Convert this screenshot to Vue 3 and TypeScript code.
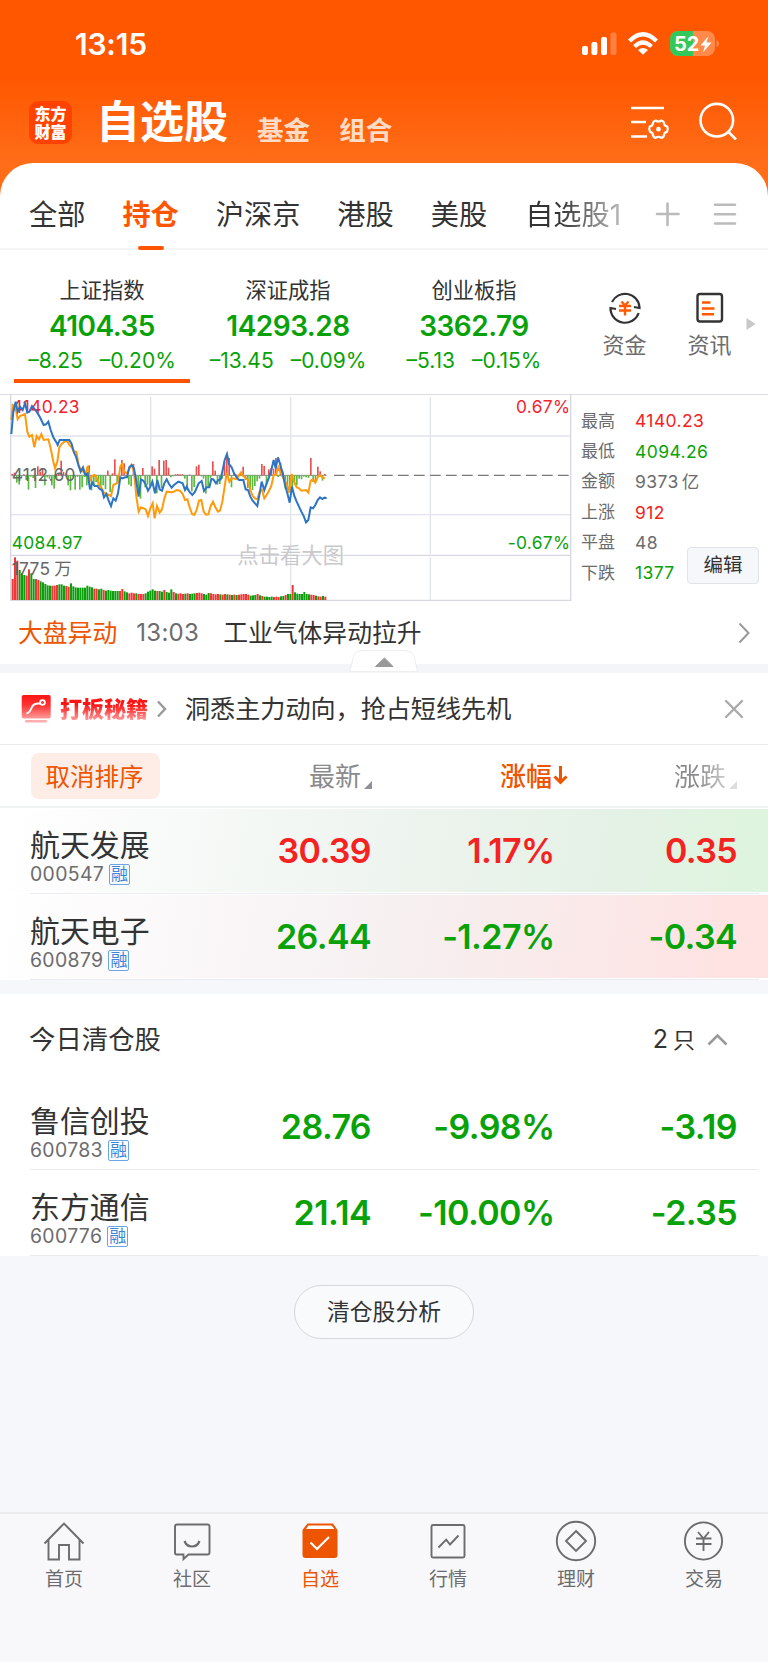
<script setup lang="ts">
interface Quote { name: string; code: string; price: string; pct: string; diff: string; tone: string; wash: string }

const tabs: string[] = ['全部', '持仓', '沪深京', '港股', '美股', '自选股1']
const indices = [
  { name: '上证指数', value: '4104.35', diff: '–8.25', pct: '–0.20%' },
  { name: '深证成指', value: '14293.28', diff: '–13.45', pct: '–0.09%' },
  { name: '创业板指', value: '3362.79', diff: '–5.13', pct: '–0.15%' },
]
const stats = [
  { label: '最高', value: '4140.23', tone: 'up' },
  { label: '最低', value: '4094.26', tone: 'down' },
  { label: '金额', value: '9373', unit: '亿', tone: 'flat' },
  { label: '上涨', value: '912', tone: 'up' },
  { label: '平盘', value: '48', tone: 'flat' },
  { label: '下跌', value: '1377', tone: 'down' },
]
const holdings: Quote[] = [
  { name: '航天发展', code: '000547', price: '30.39', pct: '1.17%', diff: '0.35', tone: 'up', wash: 'green' },
  { name: '航天电子', code: '600879', price: '26.44', pct: '-1.27%', diff: '-0.34', tone: 'down', wash: 'red' },
]
const cleared: Quote[] = [
  { name: '鲁信创投', code: '600783', price: '28.76', pct: '-9.98%', diff: '-3.19', tone: 'down', wash: '' },
  { name: '东方通信', code: '600776', price: '21.14', pct: '-10.00%', diff: '-2.35', tone: 'down', wash: '' },
]
const nav: string[] = ['首页', '社区', '自选', '行情', '理财', '交易']

const blueLine = '34,132 40,65 47,35 53,65 60,50 68,60 75,40 82,68 88,65 96,48 110,65 120,82 131,105 138,103 145,95 152,120 160,142 168,155 173,165 179,150 208,150 215,162 222,188 228,200 235,225 242,245 249,232 256,255 263,250 270,298 277,278 284,288 292,288 299,297 306,300 312,322 319,312 326,332 333,348 340,325 347,332 354,310 361,262 368,265 375,262 381,262 388,232 395,225 402,235 409,275 416,320 423,268 430,272 437,283 444,302 451,290 457,275 465,310 472,270 479,298 486,302 493,280 500,268 507,282 515,293 522,285 535,275 548,280 555,300 560,290 568,305 577,315 585,305 596,280 605,273 612,303 620,292 628,292 634,267 640,268 648,280 655,270 662,268 668,240 674,210 681,192 687,222 695,232 702,250 710,262 717,270 730,270 737,298 744,300 751,320 758,332 765,340 772,348 779,310 785,275 793,300 800,280 807,262 814,240 821,210 827,235 834,202 841,225 848,250 855,285 862,310 869,338 876,290 883,318 890,335 897,350 904,365 911,378 918,397 925,390 932,352 939,355 946,345 953,330 960,322 967,327 973,323 980,325'
const orangeLine = '34,90 38,45 46,50 53,88 60,78 68,75 75,72 82,125 88,140 96,135 103,172 110,138 117,148 124,132 131,150 145,148 152,175 160,215 165,235 172,215 178,172 185,162 193,155 202,153 208,165 215,172 222,185 229,185 236,225 243,242 250,245 256,255 263,228 270,270 276,258 284,255 291,265 298,285 305,295 312,308 320,312 333,318 340,285 354,278 361,230 366,222 373,245 381,250 388,235 395,225 402,245 409,320 416,365 423,352 437,358 444,378 451,355 458,340 464,385 471,348 479,368 486,358 493,325 500,305 515,307 522,305 530,300 540,302 548,312 555,330 562,328 569,352 576,372 583,375 590,360 597,332 604,330 611,365 618,374 625,373 632,348 639,335 646,352 654,365 660,362 667,335 674,290 680,248 688,275 695,265 709,267 723,247 730,258 744,270 751,300 758,318 765,325 772,328 779,305 786,300 793,325 800,315 807,302 814,288 821,255 828,255 835,232 842,248 849,262 856,275 863,290 868,308 875,252 882,275 890,292 897,295 904,302 918,300 925,308 932,272 939,268 946,278 953,262 960,255 967,262 975,265'

/* positive = buying pressure (above the axis), negative = selling pressure */
const force: number[] = [
  4, 8, -22, -28, -6, 3, -14, -43, -4, -8, -38, 27, 10, 20, -30, -6, -10, -30, -40, -12,
  6, 44, 10, 6, -30, -45, -4, -43, -5, -43, -36, -5, -30, 30, -45, -28, -20, -32, -40, -30,
  -42, 14, -50, 6, 48, -22, -5, 46, 36, -4, -28, -33, 34, -34, -50, -70, 22, -36, -28, -34,
  27, 20, -54, 46, -38, 44, 46, 23, -6, -3, 3, 4, 3, 3, -10, -45, 2, -48, -35, 27,
  32, -3, -10, -55, -34, -8, 42, 14, -28, -26, -10, 40, 62, 52, -36, 6, 2, -6, 8, 26,
  -14, -38, -50, -44, -32, -18, -10, 34, 28, -28, 18, 22, 20, 52, -5, 38, 12, -40, -42, -50,
  -38, -28, -30, -10, -12, -4, -6, -8, 52, -20, -18, 26, 12, -16, 4,
]
const volume: number[] = [
  63, 128, 118, 90, 80, 75, 73, 92, 80, 63, 63, 60, 56, 53, 48, 44, 43, 43, 43, 45,
  47, 47, 43, 42, 40, 50, 41, 38, 37, 37, 37, 37, 43, 40, 38, 34, 34, 32, 34, 30,
  28, 30, 28, 27, 27, 27, 27, 33, 26, 23, 20, 22, 20, 20, 18, 18, 18, 20, 25, 28,
  32, 28, 27, 27, 25, 30, 24, 22, 32, 24, 20, 19, 20, 18, 19, 20, 18, 19, 20, 21,
  22, 20, 18, 16, 21, 20, 18, 17, 18, 17, 16, 18, 17, 16, 15, 16, 15, 16, 17, 18,
  18, 16, 13, 14, 15, 18, 14, 12, 10, 10, 9, 10, 9, 10, 9, 11, 12, 15, 18, 18,
  45, 23, 19, 18, 18, 24, 18, 17, 16, 15, 13, 11, 10, 12, 10,
]
const volumeColors = 'rrrgggrrggrrgggggrrrgggrrggggggggggrrggrggggggrrggrrrgrrrgggggrggrgggrgrrrgrgggrrrgggrrrrgrrgrgrgrrrrrgggrgrggggrrrggrggrgrggggg' + 'rgggggggrrgrrgr'
const colorAt = (i: number): boolean => (i < 120 ? volumeColors[i] : volumeColors[volumeColors.length - 135 + i]) === 'r'
const volumeBars = volume.map((h, i) => ({ x: 35 + i * 7, h, red: colorAt(i) }))
const forceBars = force.map((h, i) => ({ x: 34 + i * 7, h }))
</script>

<template>
  <div class="page">
    <header class="hero">
      <div class="status">
        <span class="clock">13:15</span>
        <svg class="status-icons" width="140" height="30" viewBox="580 28 140 30">
          <g fill="#fff">
            <rect x="582" y="46" width="6" height="9" rx="2" /><rect x="591.4" y="42" width="6" height="13" rx="2" />
            <rect x="601" y="37" width="6" height="18" rx="2" /><rect x="610.5" y="32.5" width="6" height="22.5" rx="2" opacity=".25" />
          </g>
          <g fill="none" stroke="#fff" stroke-width="4.2">
            <path d="M629.5 41 Q643 27.500 656.500 41" /><path d="M634.500 46.500 Q643 38.500 651.500 46.500" />
          </g>
          <path d="M638 50 Q643 46 648 50 L643 54.800Z" fill="#fff" />
          <rect x="670" y="31" width="45" height="25" rx="8" fill="#ff8a4a" />
          <path d="M678 31H693V56H678A8 8 0 0 1 670 48V39A8 8 0 0 1 678 31" fill="#34c759" />
          <path d="M716.500 40Q719 41 719 43.500T716.500 47.500Z" fill="#ff8a4a" />
          <text x="674" y="51" class="battery">52</text>
          <path d="M708.500 36 L700.500 45.500H705L703 52.500 L711.500 42.500H706.500Z" fill="#fff" />
        </svg>
      </div>
      <div class="brand">
        <div class="logo"><span>东方</span><span>财富</span></div>
        <h1>自选股</h1>
        <span class="alt">基金</span>
        <span class="alt">组合</span>
        <svg class="tools" width="110" height="40" viewBox="630 100 110 40" fill="none" stroke="#fff" stroke-width="2.6">
          <path d="M631 108H664M631 122H646M631 136.500H647" />
          <path d="M655.600 120.500 Q658.500 122.500 661.400 120.500 Q663.700 120.800 664.200 123.700 Q664.300 125.800 667.200 126.500 Q668.500 129 667 131.800 Q664.300 132.300 664.200 134.500 Q663.800 137.300 661.500 137.900 Q658.500 135.700 655.500 137.900 Q653.200 137.300 652.800 134.500 Q652.700 132.300 650 131.800 Q648.500 129 649.800 126.500 Q652.700 125.800 652.800 123.700 Q653.300 120.800 655.600 120.500Z" stroke-width="2.2" />
          <circle cx="658.500" cy="129.200" r="1.600" fill="#fff" stroke-width="1.500" />
          <circle cx="716.800" cy="120.200" r="16.300" /><path d="M728 131.500 736 139.500" />
        </svg>
      </div>
    </header>

    <main class="sheet">
      <nav class="tabs">
        <span v-for="(t, i) in tabs" :key="t" :class="['tab', { active: i === 1, fade: i === 5 }]">{{ t }}</span>
        <svg class="tab-tools" width="84" height="28" viewBox="654 200 84 28" fill="none" stroke-width="2.600" stroke-linecap="round">
          <path d="M657 214H678.500M667.500 203.500V225" stroke="#bbb" />
          <path d="M715 204.700H735M715 214.200H735M715 223.500H735" stroke="#bbb" />
        </svg>
      </nav>

      <section class="indices">
        <div v-for="(x, i) in indices" :key="x.name" :class="['index', { on: i === 0 }]">
          <div class="index-name">{{ x.name }}</div>
          <div class="index-value">{{ x.value }}</div>
          <div class="index-sub"><span>{{ x.diff }}</span><span>{{ x.pct }}</span></div>
        </div>
        <div class="shortcuts">
          <div class="shortcut">
            <svg width="36" height="36" viewBox="607 290 36 36" fill="none" stroke="#333" stroke-width="2.200">
              <path d="M612 302A14.500 14.500 0 0 1 639.500 307V308L634 307M638.700 313A14.500 14.500 0 0 1 610.500 308V308L616 309" />
              <path d="M621.500 301.500 625 305.500 628.500 301.500M619 306H631M619 310.500H631M625 306V315.500" stroke="#ff5a00" stroke-width="2.400" />
            </svg>
            <span>资金</span>
          </div>
          <div class="shortcut">
            <svg width="36" height="36" viewBox="692 290 36 36" fill="none" stroke="#333" stroke-width="2.400">
              <rect x="697.500" y="294" width="24.500" height="27.500" rx="2.500" />
              <path d="M702 302.500H710.500M702 308.500H714.500M702 314.200H714" stroke="#ff5a00" />
            </svg>
            <span>资讯</span>
          </div>
        </div>
        <svg class="more" width="10" height="14" viewBox="0 0 10 14"><path d="M.5 1V13L9.500 7Z" fill="#c8c8ca" /></svg>
      </section>

      <section class="market">
        <svg class="chart" width="572" height="208" viewBox="0 12 1716 624">
          <g stroke="#e1e4ed" stroke-width="4" fill="none">
            <path d="M32 138H1712M32 374H1712M452 21V492M452 501V630M872 21V492M872 501V630M1291 21V492M1291 501V630" />
            <path d="M32 13V631H1712V13M32 496H1712" stroke="#d6d9e3" />
          </g>
          <text x="712" y="520" class="hint">点击看大图</text>
          <path d="M34 256H980" stroke="#888" stroke-width="3" />
          <path d="M1002 256H1712" stroke="#777" stroke-width="4" stroke-dasharray="32 16" />
          <rect v-for="b in forceBars" :key="'f' + b.x" :x="b.x" :y="b.h > 0 ? 256 - b.h : 256" width="5" :height="Math.abs(b.h)" :fill="b.h > 0 ? '#ea5050' : '#5cba42'" />
          <rect v-for="b in volumeBars" :key="'v' + b.x" :x="b.x" :y="630 - b.h" width="6" :height="b.h" :fill="b.red ? '#f23636' : '#0c9e0c'" />
          <g class="scale">
            <text x="35" y="68" fill="#f5222d">4140.23</text>
            <text x="35" y="273" fill="#666">4112.60</text>
            <text x="35" y="477" fill="#0aa20a">4084.97</text>
            <text x="35" y="556" fill="#666">1775<tspan dx="12">万</tspan></text>
            <text x="1711" y="68" fill="#f5222d" text-anchor="end">0.67%</text>
            <text x="1711" y="478" fill="#0aa20a" text-anchor="end">-0.67%</text>
          </g>
          <polyline :points="orangeLine" fill="none" stroke="#ff9a0a" stroke-width="6" />
          <polyline :points="blueLine" fill="none" stroke="#2d74c4" stroke-width="6" />
        </svg>
        <div class="stats">
          <div v-for="s in stats" :key="s.label" class="stat">
            <span class="stat-label">{{ s.label }}</span>
            <span :class="s.tone">{{ s.value }}<span v-if="s.unit" class="unit">{{ s.unit }}</span></span>
          </div>
        </div>
        <button class="edit">编辑</button>
      </section>

      <section class="news">
        <span class="news-tag">大盘异动</span>
        <span class="news-time">13:03</span>
        <span>工业气体异动拉升</span>
        <svg class="push" width="14" height="22" viewBox="0 0 14 22" fill="none" stroke="#999" stroke-width="2"><path d="M2.500 1.500 11.500 11 2.500 20.500" /></svg>
      </section>
      <div class="band">
        <svg class="notch" width="70" height="24" viewBox="0 0 70 24">
          <path d="M1 22.500 L4.500 7Q6.500 1.500 14 1.500H55Q62.500 1.500 65 7L68.500 22.500Z" fill="#fff" stroke="#eceef2" />
          <path d="M26.500 17.500 35.500 9 44 17.500Z" fill="#999" stroke="#999" stroke-linejoin="round" stroke-width="1" />
        </svg>
      </div>

      <section class="promo">
        <svg width="31" height="30" viewBox="21 694 31 30">
          <defs><linearGradient id="red" x1="0" y1="0" x2="0" y2="1"><stop offset="0" stop-color="#ff1414" /><stop offset=".45" stop-color="#ff3434" /><stop offset="1" stop-color="#ff9b9b" /></linearGradient></defs>
          <rect x="21.700" y="695" width="29" height="23.500" rx="2" fill="url(#red)" />
          <path d="M26.500 713.500Q29.500 713 31.500 708Q33 703 40 703.500" fill="none" stroke="#fff" stroke-width="2" />
          <circle cx="42.500" cy="702.500" r="2.400" fill="none" stroke="#fff" stroke-width="1.800" />
          <rect x="25" y="720" width="22" height="2.500" rx="1.200" fill="#ffadad" />
        </svg>
        <b class="promo-tag">打板秘籍</b>
        <svg width="10" height="18" viewBox="0 0 10 18" fill="none" stroke="#999" stroke-width="2.400"><path d="M1 1.500 8 9 1 16.500" /></svg>
        <span class="promo-text">洞悉主力动向，抢占短线先机</span>
        <svg class="push" width="20" height="20" viewBox="0 0 20 20" fill="none" stroke="#aaa" stroke-width="2.400" stroke-linecap="round"><path d="M2 2 18 18M18 2 2 18" /></svg>
      </section>

      <section class="thead">
        <button class="reset">取消排序</button>
        <span class="th">最新<svg width="8" height="8" viewBox="0 0 8 8"><path d="M8 0V8H0Z" fill="#8f8f96" /></svg></span>
        <span class="th sort">涨幅<svg width="15" height="20" viewBox="0 0 15 20" fill="none" stroke="#ee5500" stroke-width="3"><path d="M7.500 1V17M1.500 11.500 7.500 17.300 13.500 11.500" /></svg></span>
        <span class="th last"><i>涨跌</i><svg width="8" height="8" viewBox="0 0 8 8"><path d="M8 0V8H0Z" fill="#ddd" /></svg></span>
      </section>

      <div v-for="q in holdings" :key="q.code" :class="['quote', q.wash]">
        <div class="who"><div class="name">{{ q.name }}</div><div class="code">{{ q.code }}<span class="badge">融</span></div></div>
        <span :class="['num', q.tone]">{{ q.price }}</span>
        <span :class="['num', q.tone]">{{ q.pct }}</span>
        <span :class="['num', q.tone]">{{ q.diff }}</span>
      </div>
      <div class="spacer"></div>

      <div class="cleared-head">
        <span>今日清仓股</span>
        <span class="count">2<span>只</span></span>
        <svg width="21" height="13" viewBox="0 0 21 13" fill="none" stroke="#999" stroke-width="2.600"><path d="M1.500 11.500 10.500 2.500 19.500 11.500" /></svg>
      </div>
      <div v-for="q in cleared" :key="q.code" class="quote">
        <div class="who"><div class="name">{{ q.name }}</div><div class="code">{{ q.code }}<span class="badge">融</span></div></div>
        <span :class="['num', q.tone]">{{ q.price }}</span>
        <span :class="['num', q.tone]">{{ q.pct }}</span>
        <span :class="['num', q.tone]">{{ q.diff }}</span>
      </div>
    </main>

    <div class="rest"><button class="analyse">清仓股分析</button></div>

    <footer class="bottom">
      <div v-for="(n, i) in nav" :key="n" :class="['nav', { active: i === 2 }]">
        <svg width="44" height="44" viewBox="-22 -22 44 44" fill="none" stroke="#6c6c6e" stroke-width="1.900">
          <path v-if="i === 0" d="M-19.500 2.500 0 -17.500 19.500 2.500M-15.500 -1V18.500H-5V4H5V18.500H15.500V-1" />
          <template v-else-if="i === 1"><path d="M-15 -16.500H15.500Q17.500 -16.500 17.500 -14.500V11.500Q17.500 13.500 15.500 13.500H-3.500L-8.500 18V13.500H-15.500Q-17 13.500 -17 11.500V-14.500Q-17 -16.500 -15 -16.500" /><path d="M-7.500 0Q-5.500 5.500 0 5.500T7.500 0" stroke-width="2.200" /></template>
          <template v-else-if="i === 2"><path d="M-12.500 -17.500H13L17.500 -11V14Q17.500 17 14.500 17H-14.500Q-17.500 17 -17.500 14V-11Z" fill="#ee5500" stroke="none" /><path d="M-11.500 -15.500H11.500L14.500 -12H-14Z" fill="#fff" stroke="none" /><path d="M-9.500 1.500 -3 8 9 -4" stroke="#fff" stroke-width="2.200" /></template>
          <template v-else-if="i === 3"><rect x="-16.500" y="-16" width="33" height="32.500" rx="1.500" /><path d="M-9.500 6.500 -1.800 -1.300 2 3.500 10.500 -5.500" /></template>
          <template v-else-if="i === 4"><circle r="19.200" /><path d="M0 -10 10 0 0 10 -10 0Z" /></template>
          <template v-else><circle cx="-.5" r="18.600" /><path d="M-6 -9 -.5 -2.500 5 -9M-8 -2.500H7.500M-8 3H7.500M-.5 -2.500V10" /></template>
        </svg>
        <span>{{ n }}</span>
      </div>
    </footer>
  </div>
</template>

<style>
body { margin: 0; background: #f6f7fa; }
</style>

<style scoped>
.page { width: 768px; height: 1662px; display: flex; flex-direction: column; overflow: hidden; background: #f6f7fa; color: #333; font-family: Inter, "Noto Sans CJK SC", sans-serif; line-height: 1; }
.page * { box-sizing: border-box; }
.page svg { flex: none; display: block; }
button { font: inherit; color: inherit; padding: 0; }
.up { color: #f52222; }
.down { color: #08a208; }
.flat { color: #6c6c6e; }
.push { margin-left: auto; }

.hero { height: 196px; flex: none; margin-bottom: -33px; background: linear-gradient(#ff5600 0, #ff5600 75px, #ff6d18 163px, #ff6d18 100%); color: #fff; }
.status { height: 86px; display: flex; justify-content: space-between; padding: 28px 48px 0 75px; }
.clock { font-size: 30px; font-weight: 600; line-height: 32px; letter-spacing: -.2px; }
.battery { font: 700 20px Inter, sans-serif; fill: #fff; }
.brand { height: 77px; display: flex; padding: 0 28px 0 29px; }
.logo { width: 43px; height: 43px; margin: 15px 24px 0 0; border-radius: 9px; background: #ff4200; display: flex; flex-direction: column; align-items: center; justify-content: center; font-size: 16px; line-height: 18px; font-weight: 900; }
h1 { margin: 13px 29px 0 0; font-size: 44px; line-height: 46px; font-weight: 700; white-space: nowrap; }
.alt { margin: 29px 29px 0 0; font-size: 26.600px; line-height: 30px; font-weight: 700; color: #ffdcc6; white-space: nowrap; }
.tools { margin: 14px 0 0 auto; }

.sheet { position: relative; background: #fff; border-radius: 33px 33px 0 0; flex: none; }
.tabs { height: 87px; display: flex; align-items: flex-start; padding-left: 29px; border-bottom: 2px solid #f4f4f5; gap: 37px; }
.tab { height: 87px; padding-top: 35px; font-size: 28.200px; line-height: 34px; white-space: nowrap; display: flex; flex-direction: column; align-items: center; }
.tab.active { color: #ff5500; font-weight: 700; }
.tab.active::after { content: ""; margin-top: 14px; width: 26px; height: 4px; border-radius: 2px; background: #ff5500; }
.tab.fade { margin-left: 1px; background: linear-gradient(90deg, #333 35%, #bbb 100%); -webkit-background-clip: text; background-clip: text; color: transparent; }
.tab-tools { margin: 37px 0 0 -4px; }

.indices { height: 144px; display: flex; padding-left: 9px; }
.index { width: 186px; display: flex; flex-direction: column; align-items: center; }
.index-name { margin-top: 28px; font-size: 21.300px; line-height: 24px; }
.index-value { margin-top: 10px; font-size: 28px; line-height: 28px; font-weight: 600; color: #08a208; letter-spacing: -.5px; }
.index-sub { margin-top: 11px; display: flex; gap: 17px; font-size: 21px; line-height: 20px; color: #08a208; white-space: nowrap; }
.index.on::after { content: ""; margin-top: 8px; width: 176px; height: 4px; background: #ff5500; }
.shortcuts { display: flex; gap: 40px; margin-left: 35px; padding-top: 40px; }
.shortcut { width: 45px; display: flex; flex-direction: column; align-items: center; gap: 7px; font-size: 22px; line-height: 24px; color: #6c6c6e; white-space: nowrap; }
.more { margin: 67px 0 0 14px; }

.market { height: 208px; display: flex; border-top: 1px solid #dadde6; }
.chart { margin-top: -1px; }
.scale text { font: 400 52px Inter, "Noto Sans CJK SC", sans-serif; letter-spacing: 1px; }
.hint { font: 400 64px "Noto Sans CJK SC", sans-serif; fill: #c9c9cb; }
.stats { width: 115px; padding: 11px 0 0 9px; }
.stat { height: 30.400px; display: flex; align-items: center; gap: 20px; font-size: 17.500px; white-space: nowrap; letter-spacing: .4px; }
.stat-label { color: #6c6c6e; font-size: 17px; letter-spacing: 0; }
.unit { margin-left: 3px; }
.edit { width: 72px; height: 37px; margin: 152px 0 0; background: #f6f7fa; border: 1px solid #e0e3e8; border-radius: 4px; font-size: 19.500px; }

.news { height: 62px; display: flex; align-items: center; padding: 0 17px 0 18px; font-size: 24.800px; white-space: nowrap; }
.news-tag { color: #ee5500; }
.news-time { margin: 0 24px 0 19px; font-size: 24px; letter-spacing: .3px; color: #6c6c6e; }
.band { height: 9px; background: #f4f5f9; display: flex; justify-content: center; align-items: flex-end; }
.promo { height: 72px; display: flex; align-items: center; padding: 0 24px 0 21px; border-bottom: 1px solid #e9e9eb; }
.promo-tag { margin: 0 9px 0 8px; font-size: 22px; line-height: 28px; font-weight: 900; white-space: nowrap; background: linear-gradient(#ff1414 35%, #ff9b9b 90%); -webkit-background-clip: text; background-clip: text; color: transparent; }
.promo-text { margin-left: 18px; padding-top: 3px; font-size: 25.100px; white-space: nowrap; }

.thead { height: 63px; display: flex; align-items: center; padding-left: 31px; border-bottom: 2px solid #f2f3f5; }
.reset { width: 129px; height: 46px; border: 0; border-radius: 8px; background: #fdede6; color: #ee5500; font-size: 24.500px; padding: 3px 2px 0 0; }
.th { display: flex; align-items: center; padding-top: 3px; font-size: 26px; color: #8a8a8c; margin-left: 149px; white-space: nowrap; }
.th svg { margin: 15px 0 0 3px; }
.th.sort { color: #ee5500; font-weight: 500; margin-left: 128px; }
.th.sort svg { margin: -4px 0 0 1px; }
.th.last { margin-left: 106px; }
.th i { font-style: normal; background: linear-gradient(90deg, #8a8a8c 45%, #ccc 100%); -webkit-background-clip: text; background-clip: text; color: transparent; }

.quote { height: 86px; display: grid; grid-template-columns: 220px 151px 183.500px 182.500px; background: linear-gradient(#e9ebf0, #e9ebf0) 30px 85px / 729px 1px no-repeat; }
.quote.green { background: linear-gradient(#e9ebf0, #e9ebf0) 30px 85px / 729px 1px no-repeat, linear-gradient(100deg, #fff 0, #eef4ef 50%, #e4f1e5 80%, #dff4df 95%) 0 1px / 768px 83px no-repeat; }
.quote.red { background: linear-gradient(#e9ebf0, #e9ebf0) 30px 85px / 729px 1px no-repeat, linear-gradient(100deg, #fff 0, #f6f0f1 50%, #fbe7e7 80%, #ffe2e2 95%) 0 1px / 768px 83px no-repeat; }
.who { padding: 20px 0 0 30px; }
.name { font-size: 29.900px; line-height: 34px; white-space: nowrap; }
.code { display: flex; align-items: center; margin-top: 1px; font-size: 19.400px; line-height: 22px; letter-spacing: .35px; color: #6c6c6e; }
.badge { width: 21px; height: 21px; margin-left: 5px; display: flex; align-items: center; justify-content: center; border: 1px solid #6aa5e6; border-radius: 2px; color: #3d85d8; font-size: 17px; line-height: 19px; letter-spacing: 0; }
.num { font-size: 34px; font-weight: 600; line-height: 86px; text-align: right; white-space: nowrap; letter-spacing: -.6px; }
.spacer { height: 14px; background: #f6f7fa; }
.cleared-head { height: 90px; display: flex; align-items: center; padding: 1px 40px 0 29px; font-size: 26.400px; }
.count { margin: 0 12px 0 auto; font-size: 25px; }
.count span { margin-left: 5px; font-size: 22px; }

.rest { flex: 1; display: flex; justify-content: center; align-items: flex-start; padding-top: 29px; }
.analyse { width: 180px; height: 54px; border: 1px solid #d5d7dc; border-radius: 27px; background: #f9fafb; font-size: 22.800px; }
.bottom { height: 150px; flex: none; display: flex; border-top: 2px solid #ececef; background: #f8f8fb; }
.nav { width: 128px; display: flex; flex-direction: column; align-items: center; padding-top: 5px; font-size: 19px; line-height: 24px; color: #6c6c6e; }
.nav span { margin-top: 5px; }
.nav.active { color: #ee5500; }
</style>
